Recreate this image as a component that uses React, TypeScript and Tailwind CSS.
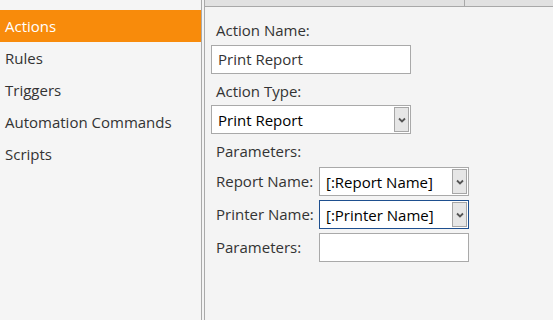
import React from "react";

const font = { fontFamily: '"Open Sans", "Noto Sans", sans-serif' };

function Chevron() {
  return (
    <svg width="8" height="6" viewBox="0 0 8 6">
      <path d="M1 1.5 L4 4.5 L7 1.5" fill="none" stroke="#555" strokeWidth="1.8" />
    </svg>
  );
}

function Select({ text, w, h, focused, className }: { text: string; w: string; h: string; focused?: boolean; className?: string }) {
  return (
    <div
      className={`${w} ${h} ${className ?? ""} flex items-center bg-white border ${focused ? "border-[#1e4f8f]" : "border-[#a9a9a9]"} p-px`}
    >
      <div className="flex-1 min-w-0 pl-[5px] text-[15px] text-black leading-[22px] whitespace-nowrap overflow-hidden">{text}</div>
      <div className="w-[15px] shrink-0 h-full bg-[#e6e6e6] border border-[#a6a6a6] flex items-center justify-center">
        <Chevron />
      </div>
    </div>
  );
}

export default function App() {
  return (
    <div className="w-[553px] h-[320px] flex bg-[#f4f4f4] overflow-hidden" style={font}>
      <div className="w-[201px] shrink-0 bg-[#f5f5f5] pt-[10px]">
        {["Actions", "Rules", "Triggers", "Automation Commands", "Scripts"].map((t, i) => (
          <div
            key={t}
            className={`h-[32px] pl-[5px] flex items-center text-[15px] ${i === 0 ? "bg-[#f88b0b] text-white h-[31px]" : "text-[#333]"}`}
          >
            {t}
          </div>
        ))}
      </div>
      <div className="w-[3px] shrink-0 border-l border-[#aaaaaa] bg-[#f4f4f4]" />
      <div className="flex-1 border-l border-[#aaaaaa] flex flex-col">
        <div className="h-[7px] shrink-0 bg-[#e1e1e1] border-b border-[#a8a8a8] flex">
          <div className="w-[260px] border-r border-[#a8a8a8]" />
        </div>
        <div className="pl-[6px] flex flex-col text-[15px] text-[#333]">
          <div className="mt-[13px] h-[20px] pl-[5px] leading-[20px]">Action Name:</div>
          <div className="mt-[5px] w-[200px] h-[29px] bg-white border border-[#a9a9a9] flex items-center pl-[6px]">
            Print Report
          </div>
          <div className="mt-[7px] h-[20px] pl-[5px] leading-[20px]">Action Type:</div>
          <Select text="Print Report" w="w-[200px]" h="h-[29px]" className="mt-[4px]" />
          <div className="mt-[7px] h-[20px] pl-[5px] leading-[20px]">Parameters:</div>
          <div className="mt-[6px] flex flex-col gap-[4px]">
            <div className="flex items-center">
              <div className="w-[108px] pl-[5px]">Report Name:</div>
              <Select text="[:Report Name]" w="w-[150px]" h="h-[29px]" />
            </div>
            <div className="flex items-center">
              <div className="w-[108px] pl-[5px]">Printer Name:</div>
              <Select text="[:Printer Name]" w="w-[150px]" h="h-[29px]" focused />
            </div>
            <div className="flex items-center">
              <div className="w-[108px] pl-[5px]">Parameters:</div>
              <div className="w-[150px] h-[29px] bg-white border border-[#a9a9a9]" />
            </div>
          </div>
        </div>
      </div>
    </div>
  );
}
